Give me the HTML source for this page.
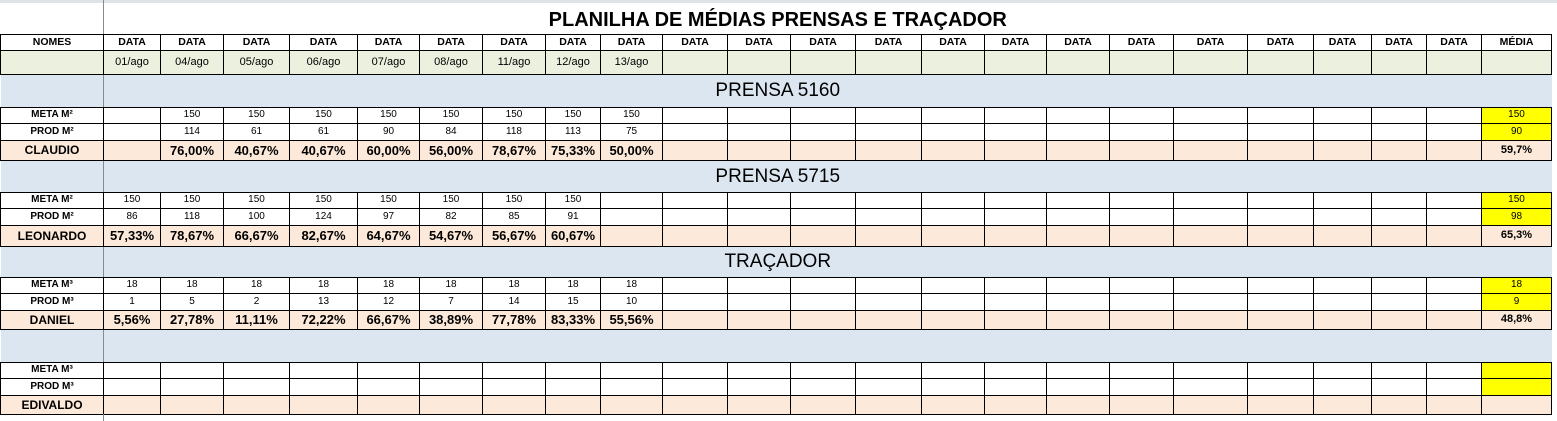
<!DOCTYPE html><html><head><meta charset="utf-8"><style>
body{margin:0;width:1557px;height:421px;background:#fff;overflow:hidden;font-family:"Liberation Sans",Arial,sans-serif}
table{border-collapse:collapse;table-layout:fixed;position:absolute;left:0;top:0}
td{padding:0;text-align:center;font-size:10px;overflow:hidden;white-space:nowrap;border:1px solid #000;line-height:1}
.b{font-weight:bold}
.g td{background:#ebf1de;font-size:11px}
.hd td{font-weight:bold;font-size:10.5px}
.band td{background:#dce6f1;border-left:none;border-right:none;font-size:19px}
.band td.l{border-right:1px solid #8a8a8a}
.p td{background:#fde9d9;font-weight:bold;font-size:13px}
.y{background:#ffff00!important}
.t td{border-top:none;border-left:none;border-right:none;font-size:20px;font-weight:bold}
.t td.l{border-right:1px solid #8a8a8a}
.nm{font-weight:bold}
.p td.nm{font-size:12px}
</style></head><body>
<div style="position:absolute;left:0;top:0;width:1557px;height:3px;background:#dfe3e8"></div>
<table>
<colgroup><col style="width:103px"><col style="width:57px"><col style="width:63px"><col style="width:66px"><col style="width:68px"><col style="width:62px"><col style="width:63px"><col style="width:63px"><col style="width:55px"><col style="width:62px"><col style="width:65px"><col style="width:63px"><col style="width:65px"><col style="width:66px"><col style="width:63px"><col style="width:62px"><col style="width:63px"><col style="width:64px"><col style="width:74px"><col style="width:66px"><col style="width:58px"><col style="width:55px"><col style="width:55px"><col style="width:70px"></colgroup>
<tr class="t" style="height:34px"><td class="l"></td><td colspan="23" style="padding-right:100px;padding-top:6px">PLANILHA DE MÉDIAS PRENSAS E TRAÇADOR</td></tr>
<tr class="hd" style="height:16px"><td>NOMES</td><td>DATA</td><td>DATA</td><td>DATA</td><td>DATA</td><td>DATA</td><td>DATA</td><td>DATA</td><td>DATA</td><td>DATA</td><td>DATA</td><td>DATA</td><td>DATA</td><td>DATA</td><td>DATA</td><td>DATA</td><td>DATA</td><td>DATA</td><td>DATA</td><td>DATA</td><td>DATA</td><td>DATA</td><td>DATA</td><td>MÉDIA</td></tr>
<tr class="g" style="height:24px"><td></td><td>01/ago</td><td>04/ago</td><td>05/ago</td><td>06/ago</td><td>07/ago</td><td>08/ago</td><td>11/ago</td><td>12/ago</td><td>13/ago</td><td></td><td></td><td></td><td></td><td></td><td></td><td></td><td></td><td></td><td></td><td></td><td></td><td></td><td></td></tr>
<tr class="band" style="height:33px"><td class="l"></td><td colspan="23" style="padding-right:100px">PRENSA 5160</td></tr>
<tr style="height:16px"><td class="nm">META M²</td><td></td><td>150</td><td>150</td><td>150</td><td>150</td><td>150</td><td>150</td><td>150</td><td>150</td><td></td><td></td><td></td><td></td><td></td><td></td><td></td><td></td><td></td><td></td><td></td><td></td><td></td><td class="y">150</td></tr>
<tr style="height:17px"><td class="nm">PROD M²</td><td></td><td>114</td><td>61</td><td>61</td><td>90</td><td>84</td><td>118</td><td>113</td><td>75</td><td></td><td></td><td></td><td></td><td></td><td></td><td></td><td></td><td></td><td></td><td></td><td></td><td></td><td class="y">90</td></tr>
<tr class="p" style="height:20px"><td class="nm">CLAUDIO</td><td></td><td>76,00%</td><td>40,67%</td><td>40,67%</td><td>60,00%</td><td>56,00%</td><td>78,67%</td><td>75,33%</td><td>50,00%</td><td></td><td></td><td></td><td></td><td></td><td></td><td></td><td></td><td></td><td></td><td></td><td></td><td></td><td style="font-size:11px">59,7%</td></tr>
<tr class="band" style="height:32px"><td class="l"></td><td colspan="23" style="padding-right:100px">PRENSA 5715</td></tr>
<tr style="height:16px"><td class="nm">META M²</td><td>150</td><td>150</td><td>150</td><td>150</td><td>150</td><td>150</td><td>150</td><td>150</td><td></td><td></td><td></td><td></td><td></td><td></td><td></td><td></td><td></td><td></td><td></td><td></td><td></td><td></td><td class="y">150</td></tr>
<tr style="height:17px"><td class="nm">PROD M²</td><td>86</td><td>118</td><td>100</td><td>124</td><td>97</td><td>82</td><td>85</td><td>91</td><td></td><td></td><td></td><td></td><td></td><td></td><td></td><td></td><td></td><td></td><td></td><td></td><td></td><td></td><td class="y">98</td></tr>
<tr class="p" style="height:21px"><td class="nm">LEONARDO</td><td>57,33%</td><td>78,67%</td><td>66,67%</td><td>82,67%</td><td>64,67%</td><td>54,67%</td><td>56,67%</td><td>60,67%</td><td></td><td></td><td></td><td></td><td></td><td></td><td></td><td></td><td></td><td></td><td></td><td></td><td></td><td></td><td style="font-size:11px">65,3%</td></tr>
<tr class="band" style="height:31px"><td class="l"></td><td colspan="23" style="padding-right:100px">TRAÇADOR</td></tr>
<tr style="height:16px"><td class="nm">META M³</td><td>18</td><td>18</td><td>18</td><td>18</td><td>18</td><td>18</td><td>18</td><td>18</td><td>18</td><td></td><td></td><td></td><td></td><td></td><td></td><td></td><td></td><td></td><td></td><td></td><td></td><td></td><td class="y">18</td></tr>
<tr style="height:17px"><td class="nm">PROD M³</td><td>1</td><td>5</td><td>2</td><td>13</td><td>12</td><td>7</td><td>14</td><td>15</td><td>10</td><td></td><td></td><td></td><td></td><td></td><td></td><td></td><td></td><td></td><td></td><td></td><td></td><td></td><td class="y">9</td></tr>
<tr class="p" style="height:19px"><td class="nm">DANIEL</td><td>5,56%</td><td>27,78%</td><td>11,11%</td><td>72,22%</td><td>66,67%</td><td>38,89%</td><td>77,78%</td><td>83,33%</td><td>55,56%</td><td></td><td></td><td></td><td></td><td></td><td></td><td></td><td></td><td></td><td></td><td></td><td></td><td></td><td style="font-size:11px">48,8%</td></tr>
<tr class="band" style="height:33px"><td class="l"></td><td colspan="23"></td></tr>
<tr style="height:16px"><td class="nm">META M³</td><td></td><td></td><td></td><td></td><td></td><td></td><td></td><td></td><td></td><td></td><td></td><td></td><td></td><td></td><td></td><td></td><td></td><td></td><td></td><td></td><td></td><td></td><td class="y"></td></tr>
<tr style="height:17px"><td class="nm">PROD M³</td><td></td><td></td><td></td><td></td><td></td><td></td><td></td><td></td><td></td><td></td><td></td><td></td><td></td><td></td><td></td><td></td><td></td><td></td><td></td><td></td><td></td><td></td><td class="y"></td></tr>
<tr class="p" style="height:19px"><td class="nm">EDIVALDO</td><td></td><td></td><td></td><td></td><td></td><td></td><td></td><td></td><td></td><td></td><td></td><td></td><td></td><td></td><td></td><td></td><td></td><td></td><td></td><td></td><td></td><td></td><td></td></tr>
</table>
<div style="position:absolute;left:103px;top:414px;width:1px;height:7px;background:#8a8a8a"></div>
</body></html>
